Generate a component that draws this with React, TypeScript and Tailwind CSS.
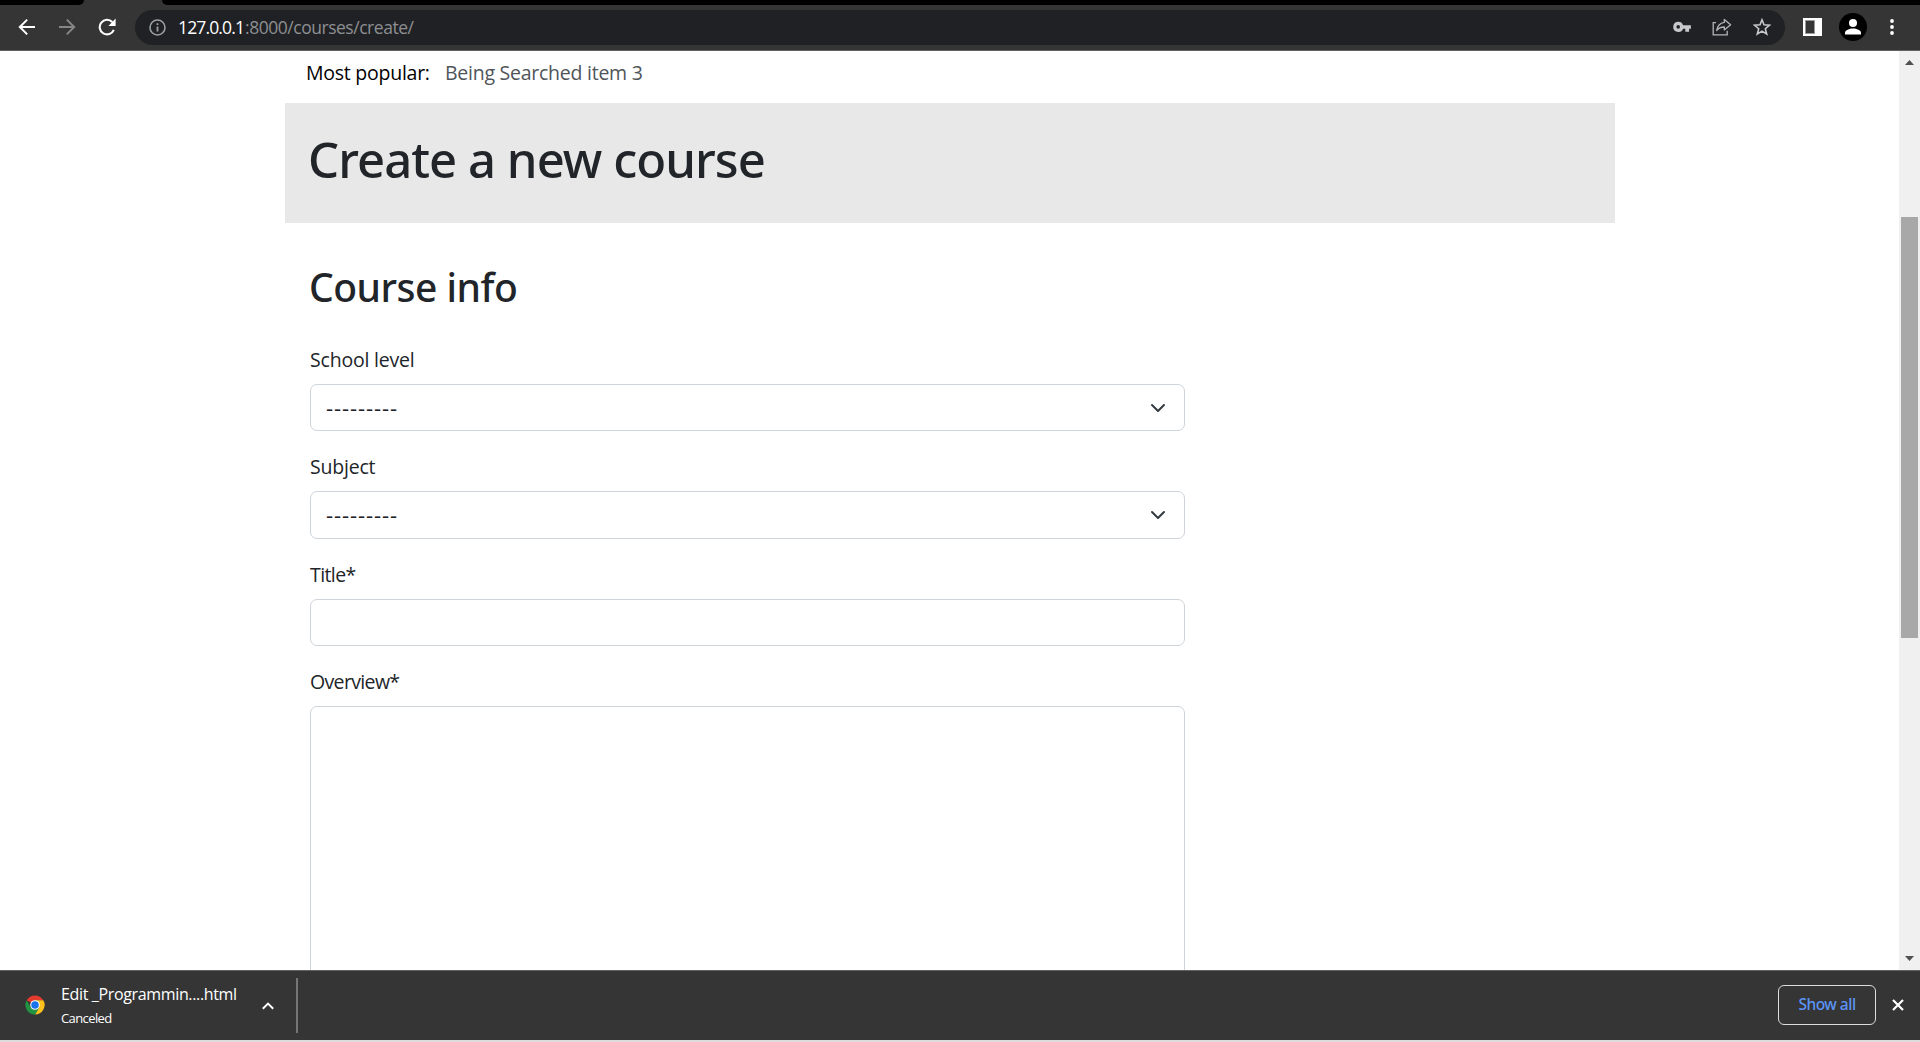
import type { ReactNode } from "react";

function BackIcon() {
  return (
    <svg width="18" height="18" viewBox="0 0 18 18" fill="none" stroke="currentColor" strokeWidth="2">
      <path d="M17 9H2.5M9.2 1.6 1.8 9l7.4 7.4" />
    </svg>
  );
}

function ReloadIcon() {
  return (
    <svg width="18" height="18" viewBox="0 0 18 18" fill="none">
      <path d="M15.8 11.8A7.3 7.3 0 1 1 14.3 4" stroke="currentColor" strokeWidth="2.1" />
      <path d="M17.6 .6v7.3h-7.2z" fill="currentColor" />
    </svg>
  );
}

function KeyIcon() {
  return (
    <svg width="18" height="12" viewBox="0 0 18 12" fill="#c7c8ca">
      <path
        fillRule="evenodd"
        d="M5.2.8a5.1 5.1 0 0 1 4.9 3.4h7.8v3.6h-1.8v3h-3.8v-3h-2.200A5.100 5.100 0 1 1 5.200.8Zm0 3.300a1.800 1.800 0 1 0 0 3.600 1.800 1.800 0 0 0 0-3.600Z"
      />
    </svg>
  );
}

function ShareIcon() {
  return (
    <svg width="20" height="18" viewBox="0 0 20 18" fill="none" stroke="#b4b5b8" strokeWidth="1.3">
      <path d="M4 4.600H1.200v12.200h14v-4" />
      <path d="M12.300 1.500 18.600 6.700l-6.300 5.200V9C8.900 9 6.500 10 4.700 12.500c.6-4.200 3.200-7.500 7.600-8.200Z" strokeLinejoin="round" />
    </svg>
  );
}

function StarIcon() {
  return (
    <svg width="18" height="18" viewBox="0 0 18 18" fill="none" stroke="#c7c8ca" strokeWidth="1.600">
      <path d="m9 1.800 2 5 5.500.4-4.200 3.500 1.400 5.300L9 13.100 4.300 16l1.400-5.300-4.200-3.500L7 6.800Z" />
    </svg>
  );
}

function ProfileIcon() {
  return (
    <svg width="28" height="28" viewBox="0 0 28 28">
      <circle cx="14" cy="14" r="14" fill="#000" />
      <circle cx="14" cy="10" r="4" fill="#fff" />
      <path d="M6 21.500v-1.800c0-2.500 4.500-4.200 8-4.200s8 1.700 8 4.200v1.800Z" fill="#fff" />
    </svg>
  );
}

function ChromeLogo() {
  return (
    <svg width="20" height="20" viewBox="0 0 48 48">
      <path d="M24 24 4.080 12.500A23 23 0 0 1 43.920 12.500H24Z" fill="#e33b2e" />
      <path d="M24 12.500H43.920A23 23 0 0 1 24 47L34 29.750Z" fill="#fcc21b" />
      <path d="M34 29.750 24 47A23 23 0 0 1 4.080 12.500L14 29.750 24 35Z" fill="#229342" />
      <circle cx="24" cy="24" r="11.500" fill="#fff" />
      <circle cx="24" cy="24" r="9" fill="#1a73e8" />
    </svg>
  );
}

function Toolbar() {
  return (
    <header className="flex h-[51px] flex-none flex-col border-b border-[#606162] bg-[#353535]">
      <div className="flex h-[5px] flex-none justify-between">
        <div className="w-[84px] rounded-br-[5px] bg-black" />
        <div className="w-[1758px] rounded-bl-[5px] bg-black" />
      </div>
      <div className="flex h-[45px] items-center pb-px pl-[18px]">
        <div className="text-white">
          <BackIcon />
        </div>
        <div className="ml-[22px] -scale-x-100 text-[#868686]">
          <BackIcon />
        </div>
        <div className="ml-[22px] text-white">
          <ReloadIcon />
        </div>
        <div className="ml-[19px] mt-px flex h-[35px] w-[1650px] items-center rounded-full bg-[#202124] pb-px pl-[14px] pr-[14px]">
          <svg width="17" height="17" viewBox="0 0 17 17" fill="none" stroke="#9aa0a6">
            <circle cx="8.500" cy="8.500" r="7.500" strokeWidth="1.600" />
            <path d="M8.500 7.500v5M8.500 4.300v1.800" strokeWidth="1.800" />
          </svg>
          <div className="ml-[12px] flex text-[17.5px] leading-6 text-[#8d8f92]">
            <span className="w-[67px] tracking-[-0.85px] text-white">127.0.0.1</span>
            <span className="tracking-[-0.47px]">:8000/courses/create/</span>
          </div>
          <div className="ml-auto flex items-center gap-[21px]">
            <KeyIcon />
            <ShareIcon />
            <StarIcon />
          </div>
        </div>
        <svg className="ml-[18px]" width="19" height="18" viewBox="0 0 19 18">
          <path d="M0 0h19v18H0Z" fill="#fff" />
          <path d="M2.500 2.500h9v13h-9Z" fill="#353535" stroke="#999" />
        </svg>
        <div className="ml-[17px]">
          <ProfileIcon />
        </div>
        <svg className="ml-[22px]" width="6" height="18" viewBox="0 0 6 18" fill="#fff">
          <circle cx="3" cy="3" r="1.900" />
          <circle cx="3" cy="9" r="1.900" />
          <circle cx="3" cy="15" r="1.900" />
        </svg>
      </div>
    </header>
  );
}

function Field({ label, children }: { label: ReactNode; children: ReactNode }) {
  return (
    <div className="flex flex-col gap-[9px]">
      <div className="h-[30px] text-[19.5px] leading-[30px]">{label}</div>
      {children}
    </div>
  );
}

function SelectBox({ className }: { className: string }) {
  return (
    <div className={`flex w-[875px] items-center justify-between rounded-[7px] border border-[#ced4da] pl-[15px] pr-[18px] ${className}`}>
      <span className="pb-[2px] text-[22px] leading-[30px] tracking-[0.92px]">---------</span>
      <svg width="16" height="16" viewBox="0 0 16 16" fill="none" stroke="#343a40" strokeWidth="2" strokeLinecap="round" strokeLinejoin="round">
        <path d="m2 5 6 6 6-6" />
      </svg>
    </div>
  );
}

function Page() {
  return (
    <main className="flex min-w-0 flex-1 flex-col overflow-hidden pl-[285px] pt-[7px]">
      <div className="flex h-[45px] flex-none pl-[21px] text-[19.5px] leading-[30px]">
        <span className="w-[139px] tracking-[-0.25px] text-black">Most popular:</span>
        <span className="tracking-[-0.25px] text-[#50555a]">Being Searched item 3</span>
      </div>
      <div className="h-[120px] w-[1330px] flex-none bg-[#e8e8e8] pl-[23px] pt-[26px]">
        <h1 className="font-['Noto_Sans'] text-[49px] font-medium leading-[60px] tracking-[-0.95px]">Create a new course</h1>
      </div>
      <section className="ml-[25px] mt-[40px] flex-none">
        <h2 className="-ml-px h-[48px] font-['Noto_Sans'] text-[39px] font-medium leading-[48px] tracking-[-0.5px]">Course info</h2>
        <div className="mt-[34px] flex flex-col gap-[21px]">
          <Field label={<span className="tracking-[-0.2px]">School level</span>}>
            <SelectBox className="h-[47px]" />
          </Field>
          <Field label={<span className="tracking-[-0.2px]">Subject</span>}>
            <SelectBox className="h-[48px]" />
          </Field>
          <Field label={<span className="tracking-[-0.6px]">Title*</span>}>
            <div className="h-[47px] w-[875px] rounded-[7px] border border-[#ced4da]" />
          </Field>
          <Field label={<span className="tracking-[-0.65px]">Overview*</span>}>
            <div className="h-[320px] w-[875px] rounded-[7px] border border-[#ced4da]" />
          </Field>
        </div>
      </section>
    </main>
  );
}

function Scrollbar() {
  return (
    <div className="flex w-[21px] flex-none flex-col items-center bg-[#f0f0f0] pb-[9px] pt-[9px]">
      <svg width="9" height="5" viewBox="0 0 9 5" fill="#505050">
        <path d="M4.500 0 9 5H0Z" />
      </svg>
      <div className="mt-[152px] h-[421px] w-[17px] bg-[#a8a8a8]" />
      <svg className="mt-auto" width="9" height="5" viewBox="0 0 9 5" fill="#505050">
        <path d="M4.500 5 9 0H0Z" />
      </svg>
    </div>
  );
}

function DownloadBar() {
  return (
    <footer className="flex h-[70px] flex-none items-center border-t border-[#606162] bg-[#353535] pb-[2px] pl-[25px] text-white">
      <ChromeLogo />
      <div className="ml-[16px] w-[195px]">
        <div className="h-[26px] whitespace-nowrap text-[16px] leading-6 tracking-[-0.35px]">Edit _Programmin....html</div>
        <div className="text-[13px] leading-5 tracking-[-0.6px]">Canceled</div>
      </div>
      <svg className="ml-[6px] mt-[2px]" width="12" height="8" viewBox="0 0 12 8" fill="none" stroke="#fff" strokeWidth="2">
        <path d="M.800 6.800 6 1.600l5.200 5.200" />
      </svg>
      <div className="ml-[22px] mt-px h-[55px] w-[2px] bg-[#757575]" />
      <div className="ml-auto flex h-[40px] w-[98px] items-center justify-center rounded-[6px] border border-[#dadce0] font-['Noto_Sans'] text-[15.5px] font-medium tracking-[-0.5px] text-[#5c94f5]">
        Show all
      </div>
      <svg className="ml-[16px] mr-[16px]" width="12" height="12" viewBox="0 0 12 12" stroke="#fff" strokeWidth="2.200">
        <path d="m1 1 10 10M11 1 1 11" />
      </svg>
    </footer>
  );
}

export default function App() {
  return (
    <div className="flex h-[1042px] w-full flex-col overflow-hidden bg-white font-['Open_Sans',sans-serif] text-[#212529]">
      <Toolbar />
      <div className="flex min-h-0 flex-1">
        <Page />
        <Scrollbar />
      </div>
      <DownloadBar />
      <div className="h-[2px] flex-none bg-[#dcdcdc]" />
    </div>
  );
}
